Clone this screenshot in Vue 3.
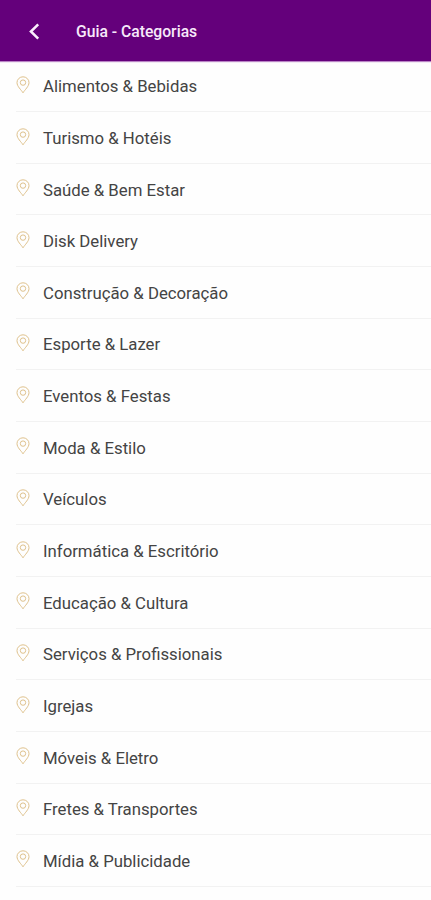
<script setup>
import { ref } from 'vue'
const categories = ref([
  'Alimentos & Bebidas',
  'Turismo & Hotéis',
  'Saúde & Bem Estar',
  'Disk Delivery',
  'Construção & Decoração',
  'Esporte & Lazer',
  'Eventos & Festas',
  'Moda & Estilo',
  'Veículos',
  'Informática & Escritório',
  'Educação & Cultura',
  'Serviços & Profissionais',
  'Igrejas',
  'Móveis & Eletro',
  'Fretes & Transportes',
  'Mídia & Publicidade'
])
</script>
<template>
  <div class="page">
    <header class="toolbar">
      <button class="back" aria-label="Voltar">
        <svg width="12" height="18" viewBox="0 0 12 18">
          <path d="M10.2 1.3 2.9 8.5l7.3 7.2" />
        </svg>
      </button>
      <h1 class="title">Guia - Categorias</h1>
    </header>
    <ul class="list">
      <li v-for="category in categories" :key="category" class="item">
        <svg class="pin" width="14" height="18" viewBox="0 0 14 18">
          <path d="M7 16.8C5.2 13.8 1 10.4 1 6.6a6 5.8 0 0 1 12 0c0 3.8-4.2 7.2-6 10.2z" />
          <circle cx="7" cy="6.6" r="2.7" />
        </svg>
        <span class="label">{{ category }}</span>
      </li>
    </ul>
  </div>
</template>
<style>
body {
  margin: 0;
  background-color: #fefefe;
}
</style>
<style scoped>
.page {
  height: 900px;
  overflow: hidden;
  font-family: Roboto, 'Liberation Sans', sans-serif;
  background-color: #fefefe;
}
.toolbar {
  display: flex;
  align-items: center;
  box-sizing: border-box;
  height: 61px;
  padding: 2px 0 0 28px;
  background-color: #64007b;
  box-shadow: 0 1px 1px #b984c5;
}
.back {
  display: flex;
  width: 48px;
  padding: 0;
  border: 0;
  background: none;
}
.back path {
  fill: none;
  stroke: #fbeffd;
  stroke-width: 2.5;
}
.title {
  margin: 0;
  font-size: 15.7px;
  font-weight: 500;
  color: #f7e9fa;
}
.list {
  margin: 0;
  padding: 0 0 0 16px;
  list-style: none;
}
.item {
  display: flex;
  align-items: center;
  box-sizing: border-box;
  height: 51.65px;
  border-bottom: 1px solid #f2f2f2;
}
.item:first-child {
  height: 51.2px;
}
.pin {
  margin: -2px 13px 0 0;
  fill: none;
  stroke: #dfc28d;
  stroke-width: 1;
}
.label {
  padding-top: 0.8px;
  font-size: 16.75px;
  color: #444;
}
</style>
